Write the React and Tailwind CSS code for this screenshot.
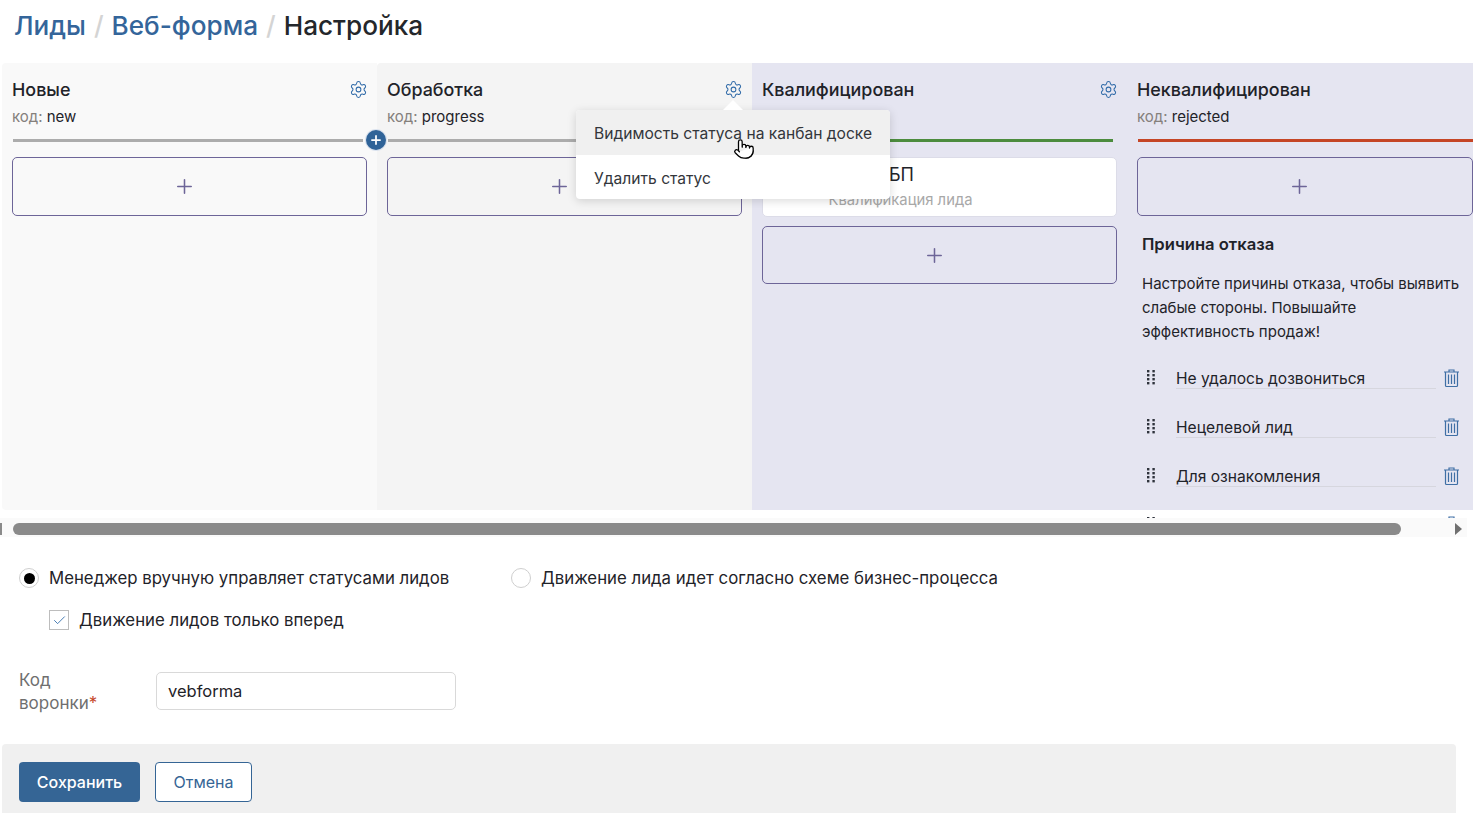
import React from "react";
import { Settings, Plus, Pointer, Check } from "lucide-react";

const font = { fontFamily: "Inter, 'Noto Sans', sans-serif" };

function Gear() {
  return <Settings size={19} strokeWidth={1.3} className="relative left-[1px] text-[#2f6aa8] shrink-0" />;
}

function AddBox({ className = "" }) {
  return (
    <div className={`flex items-center justify-center rounded-[5px] border border-[#6d6598] pr-[11px] ${className}`}>
      <Plus size={23} strokeWidth={1.6} className="text-[#6d6598]" />
    </div>
  );
}

function Head({ title, code, gear = true, lineClass, lineW, codeHidden }) {
  return (
    <>
      <div className="flex h-[26px] items-center justify-between pt-[1px]">
        <span className="text-[17.9px] font-medium leading-[26px] text-[#1f2329]">{title}</span>
        {gear && <Gear />}
      </div>
      <div className="mt-[2px] h-[24px] pt-[1px] text-[15px] leading-[24px] text-[#1f2329]">
        {!codeHidden && (
          <>
            <span className="text-[#85807c]">код: </span>
            {code}
          </>
        )}
      </div>
      <div className={`mt-[11px] ml-[1px] h-[3px] ${lineW} ${lineClass}`} />
    </>
  );
}

function Drag() {
  return (
    <svg width="10" height="16" viewBox="0 0 10 16" className="shrink-0 text-[#2f333c]">
      {[1, 5, 9, 13].map((y) => (
        <g key={y} fill="currentColor">
          <rect x="1" y={y} width="2.4" height="2.4" />
          <rect x="6.4" y={y} width="2.4" height="2.4" />
        </g>
      ))}
    </svg>
  );
}

function Trash() {
  return (
    <svg width="17" height="20" viewBox="0 0 17 20" fill="none" stroke="#3f6fa5" strokeWidth="1.2" className="shrink-0">
      <path d="M1 4h15M6 4V2h5v2M2.5 4v13.5a1 1 0 0 0 1 1h10a1 1 0 0 0 1-1V4M5.5 6.5v9.5M8.5 6.5v9.5M11.5 6.5v9.5" />
    </svg>
  );
}

function Reason({ text }) {
  return (
    <div className="flex h-[49px] shrink-0 items-start">
      <div className="ml-[4px] mt-0 w-[30px]"><Drag /></div>
      <div className="mt-[-1px] h-[21px] w-[260px] border-b border-[#d6d6de] pt-[1px] text-[15.6px] leading-[20px] text-[#1f2329]">{text}</div>
      <div className="ml-[7px] mt-[-1px]"><Trash /></div>
    </div>
  );
}

export default function App() {
  return (
    <div style={font} className="relative h-[813px] w-[1475px] overflow-hidden bg-white">
      <div className="flex h-[63px] items-start pl-[14px] pt-[8px] text-[26.15px] font-medium leading-[36px]">
        <span className="text-[#34659a]">Лиды</span>
        <span className="mx-[8px] text-[#d4d4d4]">/</span>
        <span className="text-[#34659a]">Веб-форма</span>
        <span className="mx-[8px] text-[#d4d4d4]">/</span>
        <span className="text-[#24272b]">Настройка</span>
      </div>

      <div className="relative ml-[2px] flex h-[455px] w-[1471px] items-start overflow-hidden">
        <div className="h-[447px] w-[375px] shrink-0 rounded-l-[4px] bg-[#f9f9f9] px-[10px] pt-[13px]">
          <div className="w-[355px]">
            <Head title="Новые" code="new" lineClass="bg-[#acacac]" lineW="w-[350px]" />
          </div>
          <AddBox className="mt-[15px] h-[59px] w-[355px]" />
        </div>
        <div className="h-[447px] w-[375px] shrink-0 rounded-tl-[4px] bg-[#f4f4f4] px-[10px] pt-[13px]">
          <div className="w-[355px]">
            <Head title="Обработка" code="progress" lineClass="bg-[#acacac]" lineW="w-[352px]" />
          </div>
          <AddBox className="mt-[15px] h-[59px] w-[355px]" />
        </div>
        <div className="h-[447px] w-[375px] shrink-0 bg-[#e5e5f1] px-[10px] pt-[13px]">
          <div className="w-[355px]">
            <Head title="Квалифицирован" code="qualified" codeHidden lineClass="bg-[#4c8c3e]" lineW="w-[350px]" />
          </div>
          <div className="mt-[15px] flex h-[60px] w-[355px] flex-col items-center rounded-[5px] border border-[#dcdce8] bg-white pr-[76px] pt-[5px]">
            <span className="text-[18px] leading-[24px] text-[#1f2329]">БП</span>
            <span className="mr-[2px] mt-[3px] text-[14.8px] leading-[20px] text-[#a8a8a8]">Квалификация лида</span>
          </div>
          <AddBox className="mt-[9px] h-[58px] w-[355px]" />
        </div>
        <div className="h-[447px] w-[346px] shrink-0 bg-[#e5e5f1] pl-[10px] pt-[13px]">
          <Head title="Неквалифицирован" code="rejected" gear={false} lineClass="bg-[#c54526]" lineW="w-[335px]" />
          <AddBox className="mt-[15px] h-[59px] w-[336px]" />
          <div className="h-[300px] pl-[5px]">
            <div className="mt-[16px] text-[16.6px] font-semibold leading-[24px] text-[#1f2329]">Причина отказа</div>
            <p className="mt-[16px] w-[325px] text-[15px] leading-[24px] text-[#1f2329]">
              Настройте причины отказа, чтобы выявить слабые стороны. Повышайте эффективность продаж!
            </p>
            <div className="mt-[25px] flex flex-col">
              <Reason text="Не удалось дозвониться" />
              <Reason text="Нецелевой лид" />
              <Reason text="Для ознакомления" />
              <Reason text="Спам" />
            </div>
          </div>
        </div>

        <div className="absolute left-[364px] top-[67px] flex h-[20px] w-[20px] items-center justify-center rounded-full bg-[#2f6398] shadow-[0_0_0_1px_rgba(210,220,235,0.8)]">
          <Plus size={14} strokeWidth={3} className="text-white" />
        </div>
      </div>

      <div className="flex h-[19px] w-[1467px] items-center bg-[#fafafa] pt-[2px]">
        <div className="h-[12px] w-[2px] bg-[#8a8a8a]" />
        <div className="ml-[11px] h-[12px] w-[1388px] rounded-full bg-[#8a8a8a]" />
        <div className="ml-[54px] h-0 w-0 border-y-[6px] border-l-[7px] border-y-transparent border-l-[#707070]" />
      </div>

      <div className="mt-[29px] flex h-[24px] items-center text-[16.8px] leading-[24px] text-[#1f2329]">
        <span className="ml-[19px] flex h-[20px] w-[20px] shrink-0 items-center justify-center rounded-full border border-[#cfcfcf] bg-white">
          <span className="h-[11px] w-[11px] rounded-full bg-black" />
        </span>
        <span className="ml-[10px] w-[462px]">Менеджер вручную управляет статусами лидов</span>
        <span className="h-[20px] w-[20px] shrink-0 rounded-full border border-[#cfcfcf]" />
        <span className="ml-[10px]">Движение лида идет согласно схеме бизнес-процесса</span>
      </div>

      <div className="mt-[18px] flex h-[24px] items-center text-[16.8px] leading-[24px] text-[#1f2329]">
        <span className="ml-[49px] flex h-[20px] w-[20px] items-center justify-center border border-[#bdbdbd] bg-white">
          <Check size={15} strokeWidth={1.4} className="text-[#2f6aa8]" />
        </span>
        <span className="ml-[10px]">Движение лидов только вперед</span>
      </div>

      <div className="mt-[40px] flex h-[46px] items-start">
        <div className="ml-[19px] w-[137px] text-[17px] leading-[23px] text-[#6f6f6f]">
          <div className="mt-[-3px]">Код</div>
          <div>воронки<span className="text-[#c54526]">*</span></div>
        </div>
        <div className="flex h-[38px] w-[300px] items-center rounded-[5px] border border-[#d9d9d9] pl-[11px] text-[16.5px] text-[#1f2329]">
          vebforma
        </div>
      </div>

      <div className="ml-[2px] mt-[26px] flex h-[69px] w-[1454px] items-start gap-[15px] rounded-t-[4px] bg-[#f0f0f0] pl-[17px] pt-[18px]">
        <div className="flex h-[40px] w-[121px] items-center justify-center rounded-[4px] bg-[#356595] text-[16px] font-medium text-white">
          Сохранить
        </div>
        <div className="flex h-[40px] w-[97px] items-center justify-center rounded-[4px] border border-[#356595] bg-white text-[16px] text-[#356595]">
          Отмена
        </div>
      </div>

      <div className="absolute left-[576px] top-[110px] w-[314px] rounded-[4px] bg-white text-[15.6px] leading-[24px] text-[#33363b] shadow-[0_2px_10px_rgba(0,0,0,0.15)]">
        <div className="absolute left-[147px] top-[-10px] h-0 w-0 border-x-[10px] border-b-[10px] border-x-transparent border-b-white" />
        <div className="flex h-[45px] items-center rounded-t-[4px] bg-[#f0f0f0] pl-[18px] pt-[2px]">Видимость статуса на канбан доске</div>
        <div className="flex h-[44px] items-center pl-[18px] pt-[3px]">Удалить статус</div>
      </div>
      <Pointer size={22} strokeWidth={1.4} className="absolute left-[733px] top-[138px] fill-white text-black" />
    </div>
  );
}
